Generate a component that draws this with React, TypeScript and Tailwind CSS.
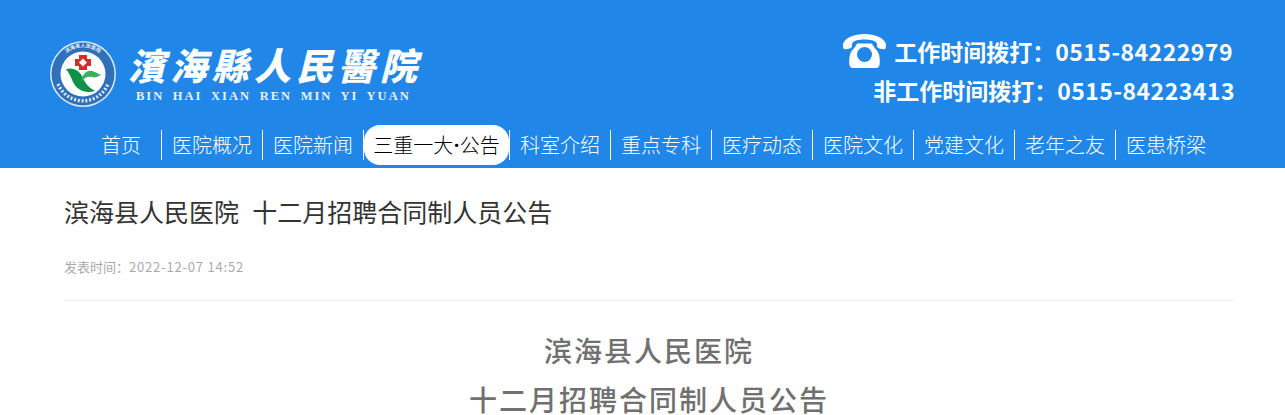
const NAV = ['首页', '医院概况', '医院新闻', '三重一大', '科室介绍', '重点专科', '医疗动态', '医院文化', '党建文化', '老年之友', '医患桥梁'];

function Emblem() {
  return (
    <svg width="66" height="66" viewBox="0 0 66 66" className="shrink-0">
      <circle cx="33" cy="33" r="33" fill="#dce9f6" />
      <circle cx="33" cy="33" r="31.500" fill="#2f70b8" />
      <circle cx="33" cy="33" r="22.500" fill="#ffffff" />
      <defs>
        <path id="ring" d="M 7 38 A 26.500 26.500 0 1 1 59 38" />
      </defs>
      <text fontSize="5" fill="#e8f1fb" fontWeight="700" style={{ fontFamily: '"Noto Sans CJK SC", sans-serif' }}>
        <textPath href="#ring" startOffset="50%" textAnchor="middle">滨海县人民医院</textPath>
      </text>
      {/* wheat ears along the lower ring */}
      <path d="M 8 43 A 27 27 0 0 0 58 43" fill="none" stroke="#dce9f6" strokeWidth="3.400" strokeDasharray="2 1.800" />
      {/* red cross */}
      <path d="M29 14h8v4h4v7h-4v4h-8v-4h-4v-7h4z" fill="#e1262c" />
      <path d="M33 17.500l4 4-4 4-4-4z" fill="#ffffff" />
      {/* green leaves */}
      <path d="M16 28c8-2 14 2 17 9 3 7 7 10 12 13-10 3-18-1-22-9-2-5-4-9-7-13z" fill="#0f9147" />
      <path d="M31 41c1-7 5-12 11-11 3 .5 6 3 9 4-4 2-6 3-9 2-5-1-8 1-11 5z" fill="#3fae5a" />
    </svg>
  );
}

function PhoneIcon() {
  return (
    <svg width="43" height="34" viewBox="0 0 43 34" className="shrink-0" fill="#ffffff">
      <path d="M21.500 0C11 0 3 3.500 .4 9c-.9 2-.3 5 .6 6 .8.8 6.200-.4 7.300-1.200 1-.8.4-4 1.200-5 1.600-2 6.400-3.200 12-3.200s10.400 1.200 12 3.200c.8 1 .2 4.200 1.200 5 1.100.8 6.500 2 7.300 1.200.9-1 1.500-4 .6-6C40 3.500 32 0 21.500 0z" />
      <path fillRule="evenodd" d="M14 9.500h15c.8 3 6 7 7 11 .8 3 1 8 .5 10.500-.3 1.800-1.500 3-3.500 3H10c-2 0-3.200-1.200-3.500-3-.5-2.500-.3-7.500.5-10.500 1-4 6.200-8 7-11zM21.500 13a7.500 7.500 0 1 0 0 15 7.500 7.500 0 0 0 0-15z" />
    </svg>
  );
}

export default function App() {
  return (
    <div className="h-screen overflow-hidden bg-white font-['Noto_Sans_CJK_SC',sans-serif]">
      <header className="h-[168px] bg-[#2086e8] text-white">
        <div className="flex h-[125px] items-start justify-between pl-[50px] pr-[52px]">
          <div className="flex items-start gap-[12px] pt-[41px]">
            <Emblem />
            <div className="mt-[3px] flex w-[294px] flex-col">
              <span className="whitespace-nowrap text-[37px] leading-[40px] font-black tracking-[5px] italic font-['Noto_Sans_CJK_TC',sans-serif]">濱海縣人民醫院</span>
              <span className="mt-[5px] ml-[8px] whitespace-nowrap text-[12.500px] leading-[14px] font-bold tracking-[2px] [word-spacing:3.500px] text-[#e6f1fc] font-['Liberation_Serif',serif]">BIN HAI XIAN REN MIN YI YUAN</span>
            </div>
          </div>
          <div className="flex flex-col items-end pt-[33px]">
            <div className="flex h-[36px] items-center gap-[8px] text-[23px] font-bold">
              <PhoneIcon />
              <span className="whitespace-nowrap">工作时间拨打：<span className="tracking-[0.500px]">0515-84222979</span></span>
            </div>
            <div className="mt-[3px] mr-[-2px] flex h-[36px] items-center text-[23px] font-bold">
              <span className="whitespace-nowrap">非工作时间拨打：<span className="tracking-[0.500px]">0515-84223413</span></span>
            </div>
          </div>
        </div>
        <nav className="flex h-[40px] items-center pl-[81px] text-[20px] font-light">
          {NAV.map((item, i) => {
            if (item === '三重一大') {
              return (
                <div key={item} className="flex shrink-0 items-center">
                  <span className="h-[30px] w-px bg-white" />
                  <a className="flex h-[40px] w-[145px] items-center justify-center rounded-[16px] bg-white whitespace-nowrap text-black">
                    {item}
                    <span className="font-['Inter',sans-serif] font-bold">·</span>
                    公告
                  </a>
                </div>
              );
            }
            return (
              <a
                key={item}
                className={`flex h-[30px] shrink-0 items-center justify-center whitespace-nowrap ${i === 0 ? 'w-[80px]' : 'w-[101px] border-l border-white'}`}
              >
                {item}
              </a>
            );
          })}
        </nav>
      </header>
      <main className="mx-[64px] w-[1170px]">
        <h1 className="pt-[25px] text-[25px] leading-[36px] font-normal whitespace-pre [word-spacing:1px] text-[#333333]">滨海县人民医院  十二月招聘合同制人员公告</h1>
        <p className="mt-[29px] text-[13px] leading-[18px] text-[#aaaaaa]">发表时间：<span className="tracking-[0.800px]">2022-12-07 14:52</span></p>
        <div className="mt-[24px] border-t border-[#eeeeee]" />
        <div className="pt-[25px] text-center text-[28px] leading-[49px] font-medium tracking-[2px] text-[#707070]">
          <p>滨海县人民医院</p>
          <p>十二月招聘合同制人员公告</p>
        </div>
      </main>
    </div>
  );
}
